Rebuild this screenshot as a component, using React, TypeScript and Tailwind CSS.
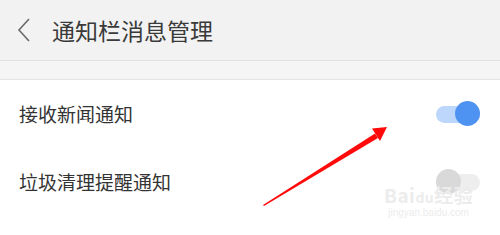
import React from 'react';

const Toggle = ({ on }: { on: boolean }) => (
  <div className="relative w-[44px] h-[26px] flex items-center">
    <div className={`w-full h-[17px] rounded-full ${on ? 'bg-[#bdd6fb]' : 'bg-[#eeeeee]'}`} />
    <div
      className={`absolute top-0 w-[25px] h-[25px] rounded-full ${on ? 'right-0 bg-[#4e93f1]' : 'left-0 bg-[#d9d9d9]'}`}
    />
  </div>
);

const Row = ({ label, on }: { label: string; on: boolean }) => (
  <div className="h-[68px] flex items-center justify-between pl-[19px] pr-[20px]">
    <span className="text-[19px] text-[#333333]">{label}</span>
    <Toggle on={on} />
  </div>
);

export default function App() {
  return (
    <div
      className="relative w-[500px] h-[235px] overflow-hidden bg-white"
      style={{ fontFamily: '"Noto Sans CJK SC", "Noto Sans", sans-serif' }}
    >
      {/* header */}
      <div className="h-[61px] bg-[#f2f2f2] border-b border-[#e2e2e2] flex items-center">
        <svg width="14" height="24" viewBox="0 0 14 24" className="ml-[17px]">
          <path d="M12 1 L2 12 L12 23" fill="none" stroke="#6a6a6a" strokeWidth="1.6" />
        </svg>
        <span className="ml-[21px] text-[23px] text-[#3a3a3a] leading-none">通知栏消息管理</span>
      </div>
      <div className="h-[19px] bg-[#f5f5f5] border-b border-[#e4e4e4]" />

      <div>
        <Row label="接收新闻通知" on />
        <Row label="垃圾清理提醒通知" on={false} />
      </div>

      {/* annotation arrow */}
      <svg className="absolute left-0 top-0" width="500" height="235" viewBox="0 0 500 235">
        <polygon points="263,205 375,133.5 378,138 264,206" fill="#ff0a0a" />
        <polygon points="387,127 372,128.5 380,141" fill="#ff0a0a" />
      </svg>

      {/* watermark */}
      <div className="absolute left-[384px] top-[185px] flex flex-col items-center text-[#ececec] leading-none">
        <span className="text-[19px] font-bold tracking-wide">Bai<span className="text-[14px]">du</span>经验</span>
        <span className="text-[10px] mt-[4px]" style={{ fontFamily: '"Liberation Sans", sans-serif' }}>jingyan.baidu.com</span>
      </div>
    </div>
  );
}
